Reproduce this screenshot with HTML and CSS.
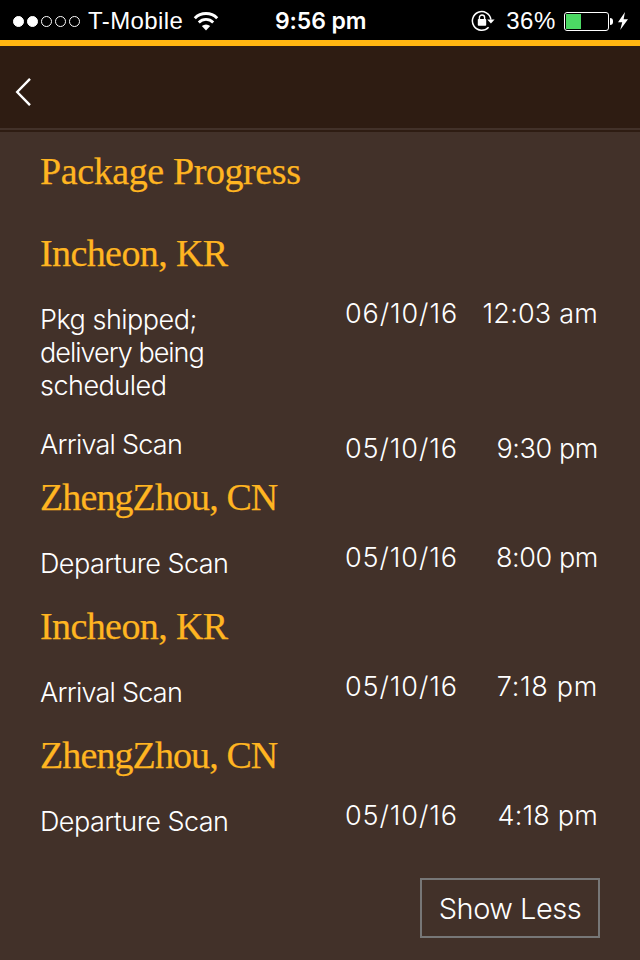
FILE: index.html
```
<!DOCTYPE html>
<html lang="en">
<head>
  <meta charset="UTF-8">
  <title>Package Progress</title>
  <link rel="stylesheet" href="styles.css">
</head>
<body>
<div class="status-bar">
  <div class="status-left">
    <div class="signal">
      <span class="dot on"></span><span class="dot on"></span><span class="dot"></span><span class="dot"></span><span class="dot"></span>
    </div>
    <span class="carrier">T-Mobile</span>
    <svg class="wifi" width="26" height="20" viewBox="0 0 26 20">
      <path d="M1.8 7.2a15.8 15.8 0 0 1 22.4 0" fill="none" stroke="#fff" stroke-width="3"/>
      <path d="M5.8 11.4a10.2 10.2 0 0 1 14.4 0" fill="none" stroke="#fff" stroke-width="2.8"/>
      <path d="M13 19.4l-4.2-4.3a6 6 0 0 1 8.4 0z" fill="#fff"/>
    </svg>
  </div>
  <span class="clock">9:56 pm</span>
  <div class="status-right">
    <svg class="lock" width="24" height="22" viewBox="0 0 24 22">
      <path d="M17.6 17.2A9.3 9.3 0 1 1 19.9 9.6" fill="none" stroke="#fff" stroke-width="1.5"/>
      <path d="M16.2 9.4h7.4l-3.7 4.2z" fill="#fff"/>
      <rect x="6.8" y="9" width="8.4" height="6.8" rx="0.8" fill="#fff"/>
      <path d="M8.4 9.5V7.6a2.6 2.6 0 0 1 5.2 0v1.9" fill="none" stroke="#fff" stroke-width="1.4"/>
    </svg>
    <span class="percent">36%</span>
    <div class="battery"><div class="level"></div></div>
    <div class="battery-tip"></div>
    <svg class="bolt" width="12" height="20" viewBox="0 0 12 20">
      <path d="M8 1L1 11.2h4.2L3.2 19 11 8.2H6.6z" fill="#fff"/>
    </svg>
  </div>
</div>

<div class="nav">
  <svg class="back" width="16" height="28" viewBox="0 0 16 28">
    <path d="M15 .8L2.2 14 15 27.2" fill="none" stroke="#fff" stroke-width="2.4"/>
  </svg>
</div>

<div class="content">
  <h1 class="title">Package Progress</h1>

  <h2 class="place incheon">Incheon, KR</h2>
  <div class="scan">
    <p class="desc pkg">Pkg shipped;<br><span class="tight">delivery being</span><br>scheduled</p>
    <span class="date">06/10/16</span>
    <span class="time wide">12:03 am</span>
  </div>
  <div class="scan second">
    <p class="desc arrival">Arrival Scan</p>
    <span class="date">05/10/16</span>
    <span class="time">9:30 pm</span>
  </div>

  <h2 class="place zhengzhou">ZhengZhou, CN</h2>
  <div class="scan">
    <p class="desc">Departure Scan</p>
    <span class="date">05/10/16</span>
    <span class="time">8:00 pm</span>
  </div>

  <h2 class="place incheon">Incheon, KR</h2>
  <div class="scan">
    <p class="desc arrival">Arrival Scan</p>
    <span class="date">05/10/16</span>
    <span class="time wider">7:18 pm</span>
  </div>

  <h2 class="place zhengzhou">ZhengZhou, CN</h2>
  <div class="scan">
    <p class="desc">Departure Scan</p>
    <span class="date">05/10/16</span>
    <span class="time wide">4:18 pm</span>
  </div>

  <button class="show-less">Show Less</button>
</div>
</body>
</html>
```
FILE: styles.css
```
* {
  box-sizing: border-box;
}
body {
  margin: 0;
  height: 960px;
  overflow: hidden;
  background: #423129;
  color: #fff;
  font-family: Inter, "Liberation Sans", sans-serif;
  font-weight: 300;
}
h1, h2, p {
  margin: 0;
}
.status-bar {
  display: grid;
  grid-template-columns: 1fr 92px 1fr;
  align-items: center;
  height: 40px;
  background: #000;
  padding: 0 11px 0 13px;
  font-family: "Liberation Sans", sans-serif;
  font-size: 24px;
  font-weight: 400;
  line-height: 42px;
}
.status-left, .status-right {
  display: flex;
  align-items: center;
}
.status-right {
  justify-content: flex-end;
}
.signal {
  display: flex;
  gap: 3px;
}
.dot {
  width: 11px;
  height: 11px;
  border: 1px solid #fff;
  border-radius: 50%;
}
.dot.on {
  background: #fff;
}
.carrier {
  margin-left: 8px;
  letter-spacing: 0.4px;
}
.wifi {
  margin-left: 10px;
}
.clock {
  font-family: Inter, sans-serif;
  font-weight: 600;
  font-size: 23px;
  letter-spacing: -0.1px;
  white-space: nowrap;
}
.lock {
  margin-right: 11px;
}
.percent {
  margin-right: 8px;
  letter-spacing: 0.6px;
}
.battery {
  width: 45px;
  height: 19px;
  border: 1px solid #fff;
  border-radius: 3px;
  padding: 1px;
}
.level {
  width: 15px;
  height: 15px;
  background: #4cd964;
}
.battery-tip {
  width: 3px;
  height: 7px;
  margin: 0 4px 0 1px;
  background: #fff;
  border-radius: 0 3px 3px 0;
}
.nav {
  display: flex;
  align-items: center;
  height: 92px;
  padding: 0 15px;
  background: #2e1c12;
  border-top: 6px solid #ffb511;
  border-bottom: 2px solid #2e1c12;
  box-shadow: inset 0 -2px #423129;
}
.back {
  margin-top: 7px;
}
.content {
  display: flex;
  flex-direction: column;
  padding: 18px 40px 0;
}
.title, .place {
  height: 44px;
  line-height: 42px;
  font-family: "Liberation Serif", serif;
  font-weight: 400;
  font-size: 38px;
  letter-spacing: -0.4px;
  -webkit-text-stroke: 0.25px #ffb521;
  color: #ffb521;
  white-space: nowrap;
}
.title {
  margin-bottom: 38px;
}
.place.incheon {
  letter-spacing: -0.6px;
}
.place.zhengzhou {
  letter-spacing: -0.9px;
}
.scan {
  display: grid;
  grid-template-columns: 1fr 114px 139px;
  padding: 27px 2px 25px 0;
  font-size: 27px;
  line-height: 33px;
  letter-spacing: -0.55px;
  white-space: nowrap;
}
.scan.second {
  padding: 1px 2px 15px 0;
}
.desc.arrival {
  letter-spacing: -0.75px;
}
.desc.pkg {
  letter-spacing: -0.5px;
}
.tight {
  letter-spacing: -1px;
}
.date, .time {
  margin-top: -6px;
  height: 33px;
}
.second .date, .second .time {
  margin: 4px 0 -4px;
}
.date {
  letter-spacing: 0.9px;
}
.time {
  text-align: right;
  letter-spacing: -0.4px;
}
.time.wide {
  letter-spacing: 0.2px;
}
.time.wider {
  letter-spacing: 0.7px;
}
.show-less {
  align-self: flex-end;
  width: 180px;
  height: 60px;
  margin-top: 15px;
  padding: 0;
  background: transparent;
  border: 2px solid #777;
  color: #fff;
  font-family: inherit;
  font-size: 29px;
  font-weight: 300;
  letter-spacing: -0.5px;
  white-space: nowrap;
}
```
